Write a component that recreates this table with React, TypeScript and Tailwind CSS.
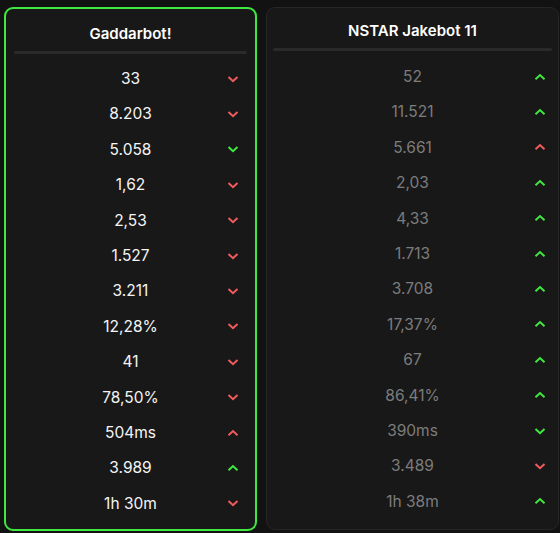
import React from "react";

type Trend = "up" | "down";
type Tone = "good" | "bad";

interface IStatRow {
  value: string;
  trend: Trend;
  tone: Tone;
}

const LEFT_ROWS: IStatRow[] = [
  { value: "33", trend: "down", tone: "bad" },
  { value: "8.203", trend: "down", tone: "bad" },
  { value: "5.058", trend: "down", tone: "good" },
  { value: "1,62", trend: "down", tone: "bad" },
  { value: "2,53", trend: "down", tone: "bad" },
  { value: "1.527", trend: "down", tone: "bad" },
  { value: "3.211", trend: "down", tone: "bad" },
  { value: "12,28%", trend: "down", tone: "bad" },
  { value: "41", trend: "down", tone: "bad" },
  { value: "78,50%", trend: "down", tone: "bad" },
  { value: "504ms", trend: "up", tone: "bad" },
  { value: "3.989", trend: "up", tone: "good" },
  { value: "1h 30m", trend: "down", tone: "bad" },
];

const RIGHT_ROWS: IStatRow[] = [
  { value: "52", trend: "up", tone: "good" },
  { value: "11.521", trend: "up", tone: "good" },
  { value: "5.661", trend: "up", tone: "bad" },
  { value: "2,03", trend: "up", tone: "good" },
  { value: "4,33", trend: "up", tone: "good" },
  { value: "1.713", trend: "up", tone: "good" },
  { value: "3.708", trend: "up", tone: "good" },
  { value: "17,37%", trend: "up", tone: "good" },
  { value: "67", trend: "up", tone: "good" },
  { value: "86,41%", trend: "up", tone: "good" },
  { value: "390ms", trend: "down", tone: "good" },
  { value: "3.489", trend: "down", tone: "bad" },
  { value: "1h 38m", trend: "up", tone: "good" },
];

function Chevron({ trend, tone }: { trend: Trend; tone: Tone }) {
  const color = tone === "good" ? "text-[#3fe93f]" : "text-[#f05c5c]";
  return (
    <svg
      width="12"
      height="8"
      viewBox="0 0 12 8"
      fill="none"
      className={color}
      aria-hidden
    >
      <path
        d={trend === "down" ? "M1.5 2 L6 6.2 L10.5 2" : "M1.5 6.2 L6 2 L10.5 6.2"}
        stroke="currentColor"
        strokeWidth="2"
      />
    </svg>
  );
}

function StatCard({
  title,
  rows,
  active,
}: {
  title: string;
  rows: IStatRow[];
  active?: boolean;
}) {
  return (
    <div
      className={
        active
          ? "flex h-[524px] w-[253px] flex-col rounded-[9px] border-2 border-[#3fe93f] bg-[#181818] px-[8px] pt-[11px]"
          : "flex h-[523px] w-[293px] flex-col rounded-[9px] border border-[#262626] bg-[#181818] px-[6px] pt-[9px]"
      }
    >
      <div className="flex h-[28px] items-center justify-center text-[15px] font-semibold text-white">
        {title}
      </div>
      <div className="mt-[3px] h-[3px] rounded-full bg-[#2a2a2a]" />
      <div
        className={
          active ? "mt-[7px] flex flex-col" : "mt-[8px] flex flex-col"
        }
      >
        {rows.map((row, i) => (
          <div
            key={i}
            className="grid h-[35.4px] grid-cols-[1fr_auto_1fr] items-center"
          >
            <span />
            <span
              className={
                active
                  ? "text-[15.5px] text-[#f4f4f4]"
                  : "text-[15.5px] text-[#7c7c7c]"
              }
            >
              {row.value}
            </span>
            <span
              className={
                active
                  ? "flex justify-end pr-[8px]"
                  : "flex justify-end pr-[6px]"
              }
            >
              <Chevron trend={row.trend} tone={row.tone} />
            </span>
          </div>
        ))}
      </div>
    </div>
  );
}

export default function App() {
  return (
    <div className="flex h-[533px] w-[560px] gap-[9px] overflow-hidden bg-[#121212] pl-[4px] pt-[7px] font-['Inter',sans-serif]">
      <StatCard title="Gaddarbot!" rows={LEFT_ROWS} active />
      <StatCard title="NSTAR Jakebot 11" rows={RIGHT_ROWS} />
    </div>
  );
}
